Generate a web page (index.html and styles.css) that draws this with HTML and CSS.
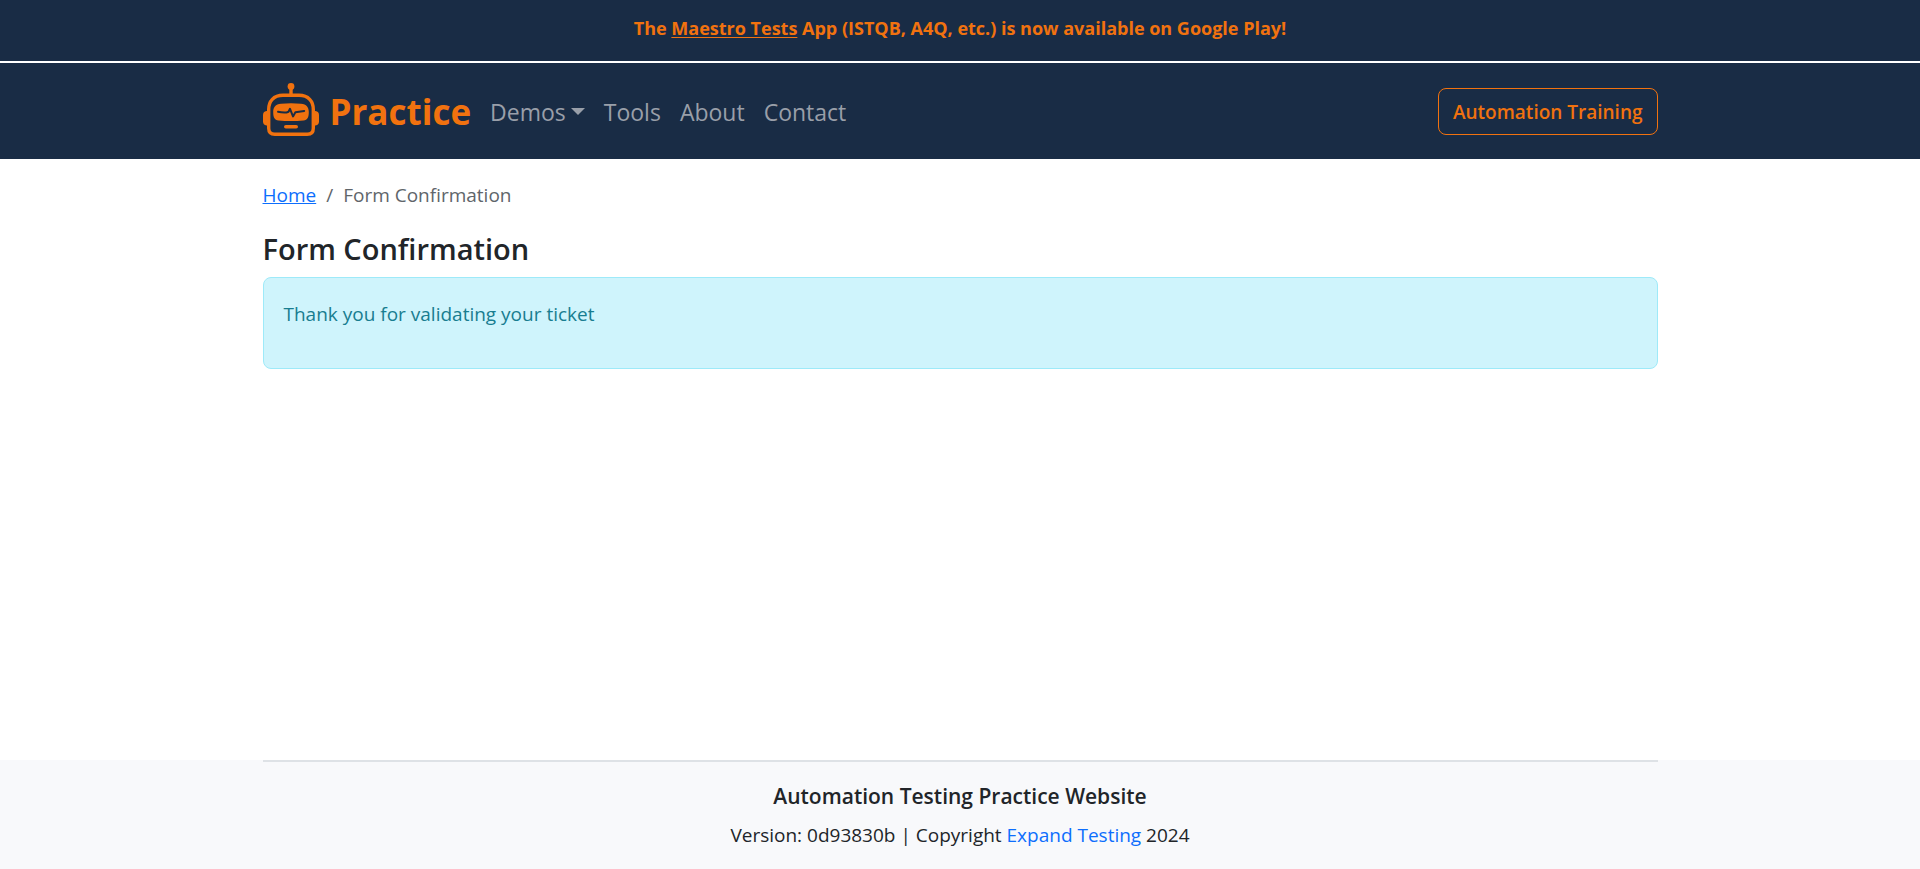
FILE: index.html
```html
<!DOCTYPE html>
<html lang="en">
<head>
<meta charset="utf-8">
<meta name="viewport" content="width=device-width, initial-scale=1">
<title>Form Confirmation</title>
<link rel="stylesheet" href="styles.css">
</head>
<body>
<div class="banner">The <a class="banner-link" href="#">Maestro Tests</a> App (ISTQB, A4Q, etc.) is now available on Google Play!</div>
<header class="navbar">
  <div class="container navbar-inner">
    <a class="brand" href="#">
      <svg class="brand-logo" viewBox="0 0 56 54" aria-hidden="true">
        <g fill="none" stroke="currentColor" stroke-width="3.4">
          <path d="M28 4v9"/>
          <path d="M20 12.300h16c9.500 0 14.300 6 14.300 14v19c0 4-2 6-6 6H11.700c-4 0-6-2-6-6v-19c0-8 4.800-14 14.300-14z"/>
        </g>
        <g fill="currentColor">
          <circle cx="28" cy="3.500" r="3.400"/>
          <path d="M5 28H3.500Q0 28.500 0 32v6.500Q0 42 3.500 42.500H5zM51 28h1.500Q56 28.500 56 32v6.500q0 3.500-3.500 4H51z"/>
          <path d="M18 20.800q10-1 20 0c5.500.5 7.800 3.500 7.800 8.200 0 5.500-1.300 8-5.300 8.400q-12.500 1.400-25 0c-4-.4-5.300-2.900-5.300-8.400 0-4.700 2.300-7.700 7.800-8.200z"/>
          <rect x="21" y="42" width="14" height="3.600" rx="1.800"/>
        </g>
        <path class="brand-pulse" d="M15 28.800q4 1 8.500.7l2-.7 1.500-3 3 7.600 2.400-4.200 8.800-1.200"/>
      </svg>
      Practice
    </a>
    <nav class="nav">
      <a class="nav-link" href="#">Demos<span class="caret"></span></a>
      <a class="nav-link" href="#">Tools</a>
      <a class="nav-link" href="#">About</a>
      <a class="nav-link" href="#">Contact</a>
    </nav>
    <a class="training" href="#">Automation Training</a>
  </div>
</header>
<main class="container main">
  <ol class="breadcrumb">
    <li><a class="crumb-link" href="#">Home</a></li>
    <li class="crumb-current">Form Confirmation</li>
  </ol>
  <h1 class="title">Form Confirmation</h1>
  <div class="alert" role="alert"><p class="alert-text">Thank you for validating your ticket</p></div>
</main>
<footer class="footer">
  <div class="container footer-inner">
    <h2 class="footer-title">Automation Testing Practice Website</h2>
    <p class="footer-text">Version: 0d93830b | Copyright <a class="footer-link" href="#">Expand Testing</a> 2024</p>
  </div>
</footer>
</body>
</html>
```
FILE: styles.css
```css
* { box-sizing: border-box; }
body {
  margin: 0;
  min-height: 100vh;
  display: flex;
  flex-direction: column;
  background: #fff;
  color: #212529;
  font-family: "Open Sans", "Noto Sans", sans-serif;
  font-size: 19px;
  line-height: 30px;
}
.container { width: 100%; max-width: 1443px; margin: 0 auto; padding: 0 24px; }
.banner {
  padding: 13px 24px 18px;
  border-bottom: 2px solid #fff;
  background: #192c45;
  color: #f1720f;
  font-size: 18px;
  font-weight: 700;
  text-align: center;
}
.banner-link { color: inherit; text-underline-offset: 2px; }
.navbar { background: #192c45; padding: 20px 0 19px; }
.navbar-inner { display: flex; align-items: center; }
.brand {
  display: flex;
  align-items: center;
  gap: 11px;
  color: #f1720f;
  font-size: 35px;
  font-weight: 700;
  line-height: 57px;
  text-decoration: none;
}
.brand-logo { width: 56px; height: 54px; margin-bottom: 3px; }
.brand-pulse { fill: none; stroke: #192c45; stroke-width: 2; stroke-linecap: round; stroke-linejoin: round; }
.nav { display: flex; gap: 19px; margin-left: 19px; }
.nav-link { color: #999fa9; font-size: 23px; text-decoration: none; }
.caret {
  display: inline-block;
  margin-left: 5px;
  vertical-align: 6px;
  border: 7px solid transparent;
  border-top-color: currentColor;
  border-bottom: 0;
}
.training {
  margin-left: auto;
  padding: 8px 14px 7px;
  border: 1px solid #f1720f;
  border-radius: 8px;
  color: #f1720f;
  font-weight: 600;
  text-decoration: none;
}
.main { flex: 1; }
.breadcrumb { display: flex; margin: 21px 0 20px; padding: 0; list-style: none; color: #60656a; }
.crumb-link { color: #0d6efd; }
.crumb-current::before { content: "/"; padding: 0 10px; }
.title { margin: 0 0 10px; font-size: 29px; font-weight: 600; line-height: 37px; }
.alert { padding: 21px 20px 19px; border: 1px solid #9eeaf9; border-radius: 8px; background: #cff4fc; color: #187d90; }
.alert-text { margin: 0 0 20px; }
.footer { background: #f8f9fb; text-align: center; }
.footer-inner { padding-bottom: 19px; }
.footer-inner::before { content: ""; display: block; border-top: 2px solid #dee2e6; }
.footer-title { margin: 20px 0 10px; font-size: 21px; font-weight: 600; line-height: 28px; }
.footer-text { margin: 0; }
.footer-link { color: #0d6efd; text-decoration: none; }
```
